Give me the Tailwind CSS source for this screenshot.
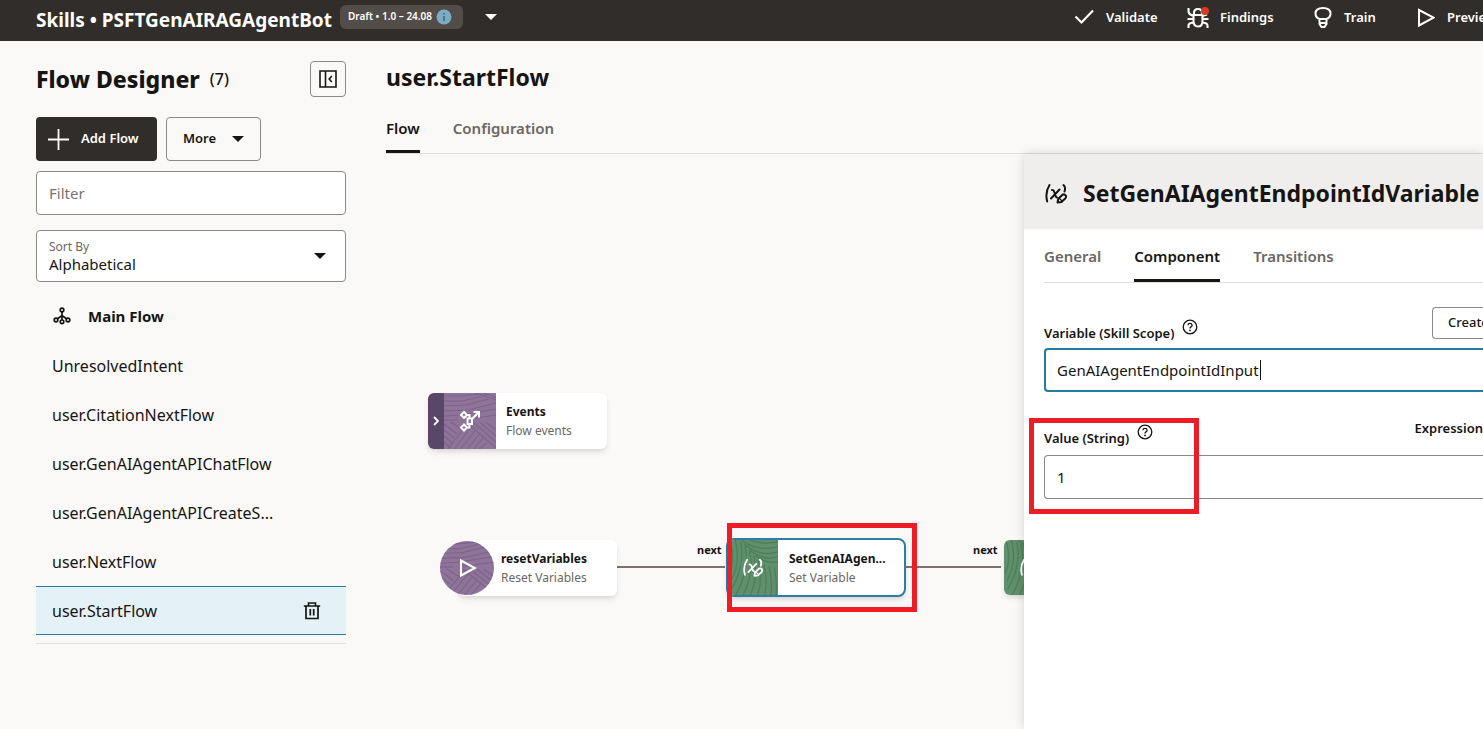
<!DOCTYPE html>
<html lang="en">
<head>
<meta charset="utf-8">
<title>Flow Designer</title>
<script src="https://cdn.jsdelivr.net/npm/@tailwindcss/browser@4"></script>
</head>
<body class="flex h-screen flex-col overflow-hidden bg-[#faf9f7] font-['Noto_Sans',sans-serif] text-[#161513]">

<svg class="hidden" aria-hidden="true">
  <defs>
    <symbol id="purple" viewBox="0 0 56 56" preserveAspectRatio="none">
      <rect width="56" height="56" fill="#8f749a"/>
      <g fill="none" stroke="#7d638a" stroke-width="1.1">
        <path d="M0 3H17L40 1M0 8H20L46 2M0 13L24 12L56 4M0 18L26 17L56 10M0 23L18 22L56 16M20 27L56 22M0 27H14M34 0L56 7M42 0L56 4"/>
        <path d="M0 31L14 41M0 37L11 45M0 43L9 50M0 49L7 55M7 29L20 37M4 56L26 30M11 56L30 33M18 56L34 37M25 56L38 41M32 56L42 45M24 29L56 55M31 29L56 49M38 29L56 43M45 29L56 37M38 56L46 50"/>
      </g>
    </symbol>
    <symbol id="green" viewBox="0 0 56 56" preserveAspectRatio="none">
      <rect width="56" height="56" fill="#5f8f6b"/>
      <g fill="none" stroke="#4c7e5a" stroke-width="1.3">
        <path d="M2 0Q9 20 1 34M8 0Q15 22 3 42M14 2Q20 24 4 50M19 6Q25 28 9 56M24 11Q30 32 17 56M29 16Q34 38 25 56M34 21Q39 42 33 56M40 25Q45 42 41 56M46 27Q50 42 48 56M52 28Q55 40 54 56"/>
        <path d="M15 0Q32 12 56 7M24 0Q38 5 56 2M18 4Q36 18 56 12M24 10Q40 22 56 17M31 16Q44 25 56 22"/>
      </g>
    </symbol>
    <symbol id="setvar" viewBox="0 0 24 24">
      <g fill="none" stroke="currentColor" stroke-width="2" stroke-linecap="round" stroke-linejoin="round">
        <path d="M5.500 3Q.8 10.500 3.200 19.500M8 8Q9.800 7.800 10.300 10L11.500 13.500Q12 15.500 13 15.500M15.500 7.500L7 16.500M19.500 3Q22 5 20.500 9.500"/>
        <path d="M13.500 20.500L14.300 16.800L18.500 12.700Q20.500 11.800 21.800 13.500Q22.500 15 21.500 16.200L17.500 20Z"/>
        <path d="M15.500 16.500L18 19" stroke-width="1.300"/>
      </g>
    </symbol>
    <symbol id="help" viewBox="0 0 16 16">
      <circle cx="8" cy="8" r="6.800" fill="none" stroke="currentColor" stroke-width="1.300"/>
      <path d="M5.900 6.300Q6.100 4.400 8 4.400T10.100 6.200Q10.100 7.300 9 7.900T8 9.500" fill="none" stroke="currentColor" stroke-width="1.300"/>
      <circle cx="8" cy="11.400" r=".9" fill="currentColor"/>
    </symbol>
  </defs>
</svg>

<header class="flex h-[41px] shrink-0 items-center overflow-hidden bg-[#312d2a] pl-9 whitespace-nowrap text-white">
  <h1 class="text-[19px] font-bold">Skills • PSFTGenAIRAGAgentBot</h1>
  <div class="mb-2 ml-2 flex h-6 w-[123px] shrink-0 items-center gap-1 rounded-md bg-[#524d48] pl-2 text-[10px] font-semibold">
    <span>Draft • 1.0 – 24.08</span>
    <svg class="size-4" viewBox="0 0 16 16" aria-hidden="true"><circle cx="8" cy="8" r="7.500" fill="#7bacc5"/><path d="M8 7v5M8 4v1.600" stroke="#47606c" stroke-width="1.500"/></svg>
  </div>
  <button class="mb-2 ml-5 p-0.5" aria-label="Switch version"><svg class="h-[6px] w-3" viewBox="0 0 12 6"><path d="M0 0H12L6 6Z" fill="#fff"/></svg></button>
  <nav class="mb-1.5 ml-auto flex w-[409px] shrink-0 items-center overflow-hidden text-[13px] font-semibold">
    <button class="flex w-28 shrink-0 items-center gap-3"><svg class="h-5 w-5" viewBox="0 0 20 20" fill="none" stroke="#fff" stroke-width="2.200"><path d="M1.500 8.500L7.500 14.500L19 2.500"/></svg>Validate</button>
    <button class="flex w-32 shrink-0 items-center gap-2.5"><svg class="h-6 w-6" viewBox="0 0 24 24" fill="none" stroke="#fff" stroke-width="2.100"><path d="M7.500 9H16.500V15Q16.500 20.500 12 20.500T7.500 15ZM8 9V7Q8 3 12 3T16 7V9M2.500 2V5Q2.500 8.500 7.500 10M16.500 10L21 8.500M1.500 13H7.500M16.500 13H22.500M2.500 22V19.500Q2.500 17 7.500 16.500M21.500 22V19.500Q21.500 17 16.500 16.500"/><circle cx="19" cy="5" r="4" fill="#d63b25" stroke="none"/></svg>Findings</button>
    <button class="flex w-[103px] shrink-0 items-center gap-3"><svg class="h-[22px] w-[18px]" viewBox="0 0 18 22" fill="none" stroke="#fff" stroke-width="2"><path d="M5.500 13V12Q1.500 10.500 1.500 6.500Q1.500 1 9 1T16.500 6.500Q16.500 10.500 12.500 12V13M5 12H13M5.500 12V17L7.500 20H10.500L12.500 17V12M6 16H12"/></svg>Train</button>
    <button class="flex shrink-0 items-center gap-3"><svg class="h-5 w-[18px]" viewBox="0 0 18 20" fill="none" stroke="#fff" stroke-width="2"><path d="M2 2V17.500L16.500 9.700Z"/></svg>Preview</button>
  </nav>
</header>

<div class="flex min-h-0 flex-1">
  <aside class="ml-9 w-[310px] shrink-0 pt-5">
    <div class="flex h-9 items-center">
      <h2 class="text-[23px] font-extrabold">Flow Designer</h2>
      <span class="ml-2.5 text-base font-medium">(7)</span>
      <button class="ml-auto grid size-9 place-items-center rounded border border-[#8b8986]" aria-label="Collapse panel"><svg class="size-[18px]" viewBox="0 0 18 18" fill="none" stroke="#161513" stroke-width="1.600"><path d="M1 1H17V17H1ZM6.500 1V17M12.800 6L10.200 9L12.800 12"/></svg></button>
    </div>
    <div class="mt-5 flex h-11 gap-[9px] text-[13px] font-semibold">
      <button class="flex w-[121px] items-center gap-3 rounded bg-[#312d2a] pl-3 text-white"><svg class="size-[21px]" viewBox="0 0 21 21" stroke="#fff" stroke-width="1.800"><path d="M10.500 0V21M0 10.500H21"/></svg>Add Flow</button>
      <button class="flex w-[95px] items-center gap-4 rounded border border-[#8b8986] pl-4">More<svg class="h-[6px] w-3" viewBox="0 0 12 6"><path d="M0 0H12L6 6Z" fill="#161513"/></svg></button>
    </div>
    <input class="mt-2.5 block h-11 w-full rounded border border-[#8b8986] bg-white px-3 text-[15px] placeholder:text-[#77736f]" aria-label="Filter" placeholder="Filter">
    <div class="relative mt-[15px]">
      <label class="absolute top-[9px] left-[13px] text-xs text-[#6b6763]" for="sort">Sort By</label>
      <select id="sort" class="block h-[52px] w-full appearance-none rounded border border-[#8b8986] bg-white px-3 pt-4 text-[15px]"><option>Alphabetical</option></select>
      <svg class="pointer-events-none absolute top-[23px] right-5 h-[6px] w-3" viewBox="0 0 12 6"><path d="M0 0H12L6 6Z" fill="#161513"/></svg>
    </div>
    <ul class="mt-2.5 border-b border-[#e0dedb] pb-2 text-base">
      <li class="flex h-[49px] items-center gap-4 px-4 text-[15px] font-bold"><svg class="size-5" viewBox="0 0 20 20" fill="none" stroke="#161513" stroke-width="1.700"><circle cx="10" cy="3" r="1.800"/><circle cx="4" cy="13" r="1.800"/><circle cx="16" cy="13" r="1.800"/><circle cx="10" cy="14.800" r="1.800"/><path d="M10 4.800V13M5.500 11.800L10 8.500L14.500 11.800"/></svg>Main Flow</li>
      <li class="flex h-[49px] items-center px-4">UnresolvedIntent</li>
      <li class="flex h-[49px] items-center px-4">user.CitationNextFlow</li>
      <li class="flex h-[49px] items-center px-4">user.GenAIAgentAPIChatFlow</li>
      <li class="flex h-[49px] items-center px-4">user.GenAIAgentAPICreateS...</li>
      <li class="flex h-[49px] items-center px-4">user.NextFlow</li>
      <li class="flex h-[49px] items-center justify-between border-y border-[#227e9e] bg-[#e4f1f7] pr-6 pl-4">user.StartFlow
        <button aria-label="Delete flow"><svg class="size-5" viewBox="0 0 20 20" fill="none" stroke="#161513" stroke-width="1.700"><path d="M1.800 5H18.200M4 5V17.500H16V5M6.500 5V2H13.500V5M8.300 8V14.500M11.700 8V14.500"/></svg></button></li>
    </ul>
  </aside>

  <main class="ml-10 flex min-w-0 flex-1 flex-col">
    <h2 class="mt-5 text-[23px] leading-8 font-bold">user.StartFlow</h2>
    <div class="mt-5 flex h-[41px] shrink-0 gap-[33px] border-b border-[#e0dedb] text-[15px] font-semibold">
      <button class="flex h-10 border-b-[3px] border-[#161513] pt-1">Flow</button>
      <button class="flex pt-1 text-[#6b6763]">Configuration</button>
    </div>
    <div class="flex min-h-0 flex-1">
      <div class="relative min-w-0 flex-1 overflow-hidden">
        <div class="absolute top-[412px] left-[231px] h-[2px] w-[108px] bg-[#7c726b]"></div>
        <div class="absolute top-[412px] left-[520px] h-[2px] w-[95px] bg-[#7c726b]"></div>
        <span class="absolute top-[388px] left-[311px] text-[11px] font-bold">next</span>
        <span class="absolute top-[388px] left-[587px] text-[11px] font-bold">next</span>

        <div class="absolute top-[239px] left-[42px] flex h-14 w-[179px] items-center overflow-hidden rounded-md bg-white shadow-md">
          <div class="grid h-full w-4 place-items-center bg-[#584766]"><svg class="h-2.5 w-1.5" viewBox="0 0 6 10" fill="none" stroke="#fff" stroke-width="1.800"><path d="M1 1L5 5L1 9"/></svg></div>
          <div class="grid h-full w-[52px] place-items-center"><svg class="col-start-1 row-start-1 size-full"><use href="#purple"/></svg>
            <svg class="col-start-1 row-start-1 size-[22px]" viewBox="0 0 22 22" fill="none" stroke="#fff" stroke-width="2"><path d="M5 2L8 5L5 8L2 5ZM5 14.500L8 17.500L5 20.500L2 17.500ZM8.500 8.500H13V14H8.500ZM8 5H10.500V8.500M10.500 14V17.500H8M13 9L19.500 2.500M14.500 2H20V7.500"/></svg></div>
          <div class="pl-2.5"><p class="text-xs leading-[19px] font-bold">Events</p><p class="text-xs leading-[19px] text-[#6b6763]">Flow events</p></div>
        </div>

        <div class="absolute top-[386px] left-[72px] flex h-14 w-[159px] items-center rounded-md bg-white pl-[43px] shadow-md">
          <div><p class="text-xs leading-[19px] font-bold">resetVariables</p><p class="text-xs leading-[19px] text-[#6b6763]">Reset Variables</p></div>
        </div>
        <div class="absolute top-[387px] left-[54px] grid size-[54px] place-items-center overflow-hidden rounded-full"><svg class="col-start-1 row-start-1 size-full"><use href="#purple"/></svg><svg class="col-start-1 row-start-1 size-5" viewBox="0 0 20 20" fill="none" stroke="#fff" stroke-width="2"><path d="M4 2.500V17.500L18 10Z"/></svg></div>

        <div class="absolute top-[384px] left-[340px] flex h-[59px] w-[180px] items-center overflow-hidden rounded-lg border-2 border-[#2c7ea5] bg-white shadow-md">
          <div class="grid h-full w-[50px] place-items-center"><svg class="col-start-1 row-start-1 size-full"><use href="#green"/></svg><svg class="col-start-1 row-start-1 size-[22px] text-white"><use href="#setvar"/></svg></div>
          <div class="pl-[11px]"><p class="text-xs leading-[19px] font-bold">SetGenAIAgen...</p><p class="text-xs leading-[19px] text-[#6b6763]">Set Variable</p></div>
        </div>

        <div class="absolute top-[386px] left-[618px] grid h-[55px] w-[51px] place-items-center overflow-hidden rounded-md shadow-md"><svg class="col-start-1 row-start-1 size-full"><use href="#green"/></svg><svg class="col-start-1 row-start-1 size-[22px] text-white"><use href="#setvar"/></svg></div>
        <div class="absolute top-[369px] left-[341px] h-[89px] w-[190px] border-[5px] border-[#ee1c25]"></div>
      </div>

      <section class="relative w-[459px] shrink-0 bg-white whitespace-nowrap shadow-[0_0_10px_#00000026]">
        <div class="flex h-[75px] items-center gap-[15px] overflow-hidden bg-[#f0eeec] pt-1 pl-5">
          <svg class="size-6 shrink-0"><use href="#setvar"/></svg>
          <h3 class="text-[23px] font-bold">SetGenAIAgentEndpointIdVariable</h3>
        </div>
        <div class="ml-5 flex h-[54px] gap-[33px] border-b border-[#e0dedb] text-[15px] font-semibold">
          <button class="flex pt-4 text-[#6b6763]">General</button>
          <button class="flex border-b-[3px] border-[#161513] pt-4">Component</button>
          <button class="flex pt-4 text-[#6b6763]">Transitions</button>
        </div>
        <div class="overflow-hidden pl-5 text-[13px] font-semibold">
          <div class="mt-6 flex h-9 items-end">
            <label for="variable">Variable (Skill Scope)</label>
            <svg class="mb-2 ml-2 size-4"><use href="#help"/></svg>
            <button class="ml-auto h-8 w-[51px] self-start overflow-hidden rounded-l border border-r-0 border-[#8b8986] pl-[15px] text-left font-medium">Create</button>
          </div>
          <div class="relative mt-[5px]">
            <input id="variable" value="GenAIAgentEndpointIdInput" class="block h-11 w-full rounded-l border-2 border-r-0 border-[#227e9e] px-[11px] text-[15px] font-normal">
            <span class="absolute top-3 left-[216px] h-5 w-px bg-[#161513]"></span>
          </div>
          <div class="mt-6 flex h-8 items-end">
            <label for="value">Value (String)</label>
            <svg class="mb-2 ml-2 size-4"><use href="#help"/></svg>
            <span class="mb-2.5 ml-auto">Expression</span>
          </div>
          <input id="value" value="1" class="mt-[7px] block h-11 w-full rounded-l border border-r-0 border-[#8b8986] px-3 text-[15px] font-normal">
        </div>
        <div class="pointer-events-none absolute top-[264px] left-[5px] h-24 w-[170px] border-[5px] border-[#ee1c25]"></div>
      </section>
    </div>
  </main>
</div>
</body>
</html>
